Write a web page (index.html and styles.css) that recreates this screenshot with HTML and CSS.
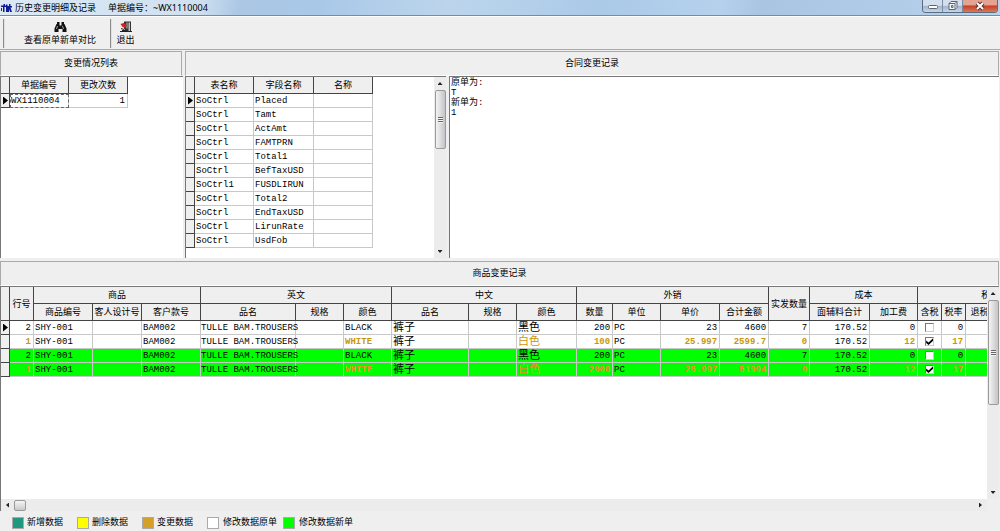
FILE: index.html
```html
<!DOCTYPE html>
<html lang="zh-CN">
<head>
<meta charset="utf-8">
<title>历史变更明细及记录</title>
<link rel="stylesheet" href="styles.css">
</head>
<body>
<header class="titlebar">
  <svg class="app-icon" viewBox="0 0 11 10" aria-hidden="true"><path d="M0 2.500h5V4H3.500v5H2V4H0zM5 1.500h1.500V9H5zM6 3h5v1.500H9.500L11 9H9L8.500 6 8 9H6.500zM8 1h1.500v2H8zM2.500 1H4v2H2.500zM0 5h1v3H0z" fill="#101c94"/></svg>
  <h1 class="title"><span>历史变更明细及记录</span><span>单据编号：~WX1110004</span></h1>
  <div class="window-buttons">
    <button class="win" aria-label="最小化"><svg width="12" height="12" viewBox="0 0 12 12"><rect x="1.500" y="5.500" width="9" height="3" rx="1" fill="#fff" stroke="#5a6575"/></svg></button>
    <button class="win" aria-label="还原"><svg width="12" height="12" viewBox="0 0 12 12"><path d="M4 1.500h6v6L8 9.500H2V3.500z" fill="#f4f6f8" stroke="#5c6776"/><path d="M4.500 5.500h1.500v2H4.500zM2 3.500h6v6M8 3.500l2-2" fill="none" stroke="#5c6776"/></svg></button>
    <button class="win win-close" aria-label="关闭"><svg width="12" height="12" viewBox="0 0 12 12"><path d="M3 3l6 6M9 3l-6 6" stroke="#5a3038" stroke-width="4"/><path d="M3 3l6 6M9 3l-6 6" stroke="#fff" stroke-width="2"/></svg></button>
  </div>
</header>

<nav class="toolbar">
  <button class="tool tool-wide">
    <svg width="13" height="12" viewBox="0 0 13 12" aria-hidden="true"><path d="M3 1h2.500v2H3zM7.500 1H10v2H7.500zM2.500 3h3v1.500h2V3h3l2 4.500V11h-4V8h-4v3h-4V7.500z" fill="#111"/><path d="M3.500 5L2.500 8M8.500 5l1 3" stroke="#ccc" stroke-width=".8"/></svg>
    <span>查看原单新单对比</span>
  </button>
  <button class="tool">
    <svg width="12" height="12" viewBox="0 0 12 12" aria-hidden="true"><path d="M4 .5h7V11H8L4 8z" fill="#333"/><path d="M6.500 1.500h1v6h-1zM8.500 1.500H10V10H8.500z" fill="#c4c4c4"/><path d="M.5 3l3-1 3 2-1 3-3-1z" fill="#d81e1e"/><path d="M1 7.500l3 1M0 10.500h12M2 9.500h5" stroke="#222"/></svg>
    <span>退出</span>
  </button>
</nav>

<main class="content">
  <div class="upper">
    <section class="changes">
      <h2 class="panel-title">变更情况列表</h2>
      <div class="grid-box">
        <table class="grid grid-changes">
          <colgroup><col class="w9"><col class="w59"><col class="w59"></colgroup>
          <thead><tr><th></th><th>单据编号</th><th>更改次数</th></tr></thead>
          <tbody><tr><th class="current"></th><td class="focused">WX1110004</td><td class="num">1</td></tr></tbody>
        </table>
      </div>
    </section>
    <section class="contract">
      <h2 class="panel-title">合同变更记录</h2>
      <div class="contract-body">
        <div class="grid-box fields">
          <div class="clip">
            <table class="grid grid-fields">
              <colgroup><col class="w9"><col class="w59"><col class="w60"><col class="w59"></colgroup>
              <thead><tr><th></th><th>表名称</th><th>字段名称</th><th>名称</th></tr></thead>
              <tbody>
                <tr><th class="current"></th><td>SoCtrl</td><td>Placed</td><td></td></tr>
                <tr><th></th><td>SoCtrl</td><td>Tamt</td><td></td></tr>
                <tr><th></th><td>SoCtrl</td><td>ActAmt</td><td></td></tr>
                <tr><th></th><td>SoCtrl</td><td>FAMTPRN</td><td></td></tr>
                <tr><th></th><td>SoCtrl</td><td>Total1</td><td></td></tr>
                <tr><th></th><td>SoCtrl</td><td>BefTaxUSD</td><td></td></tr>
                <tr><th></th><td>SoCtrl1</td><td>FUSDLIRUN</td><td></td></tr>
                <tr><th></th><td>SoCtrl</td><td>Total2</td><td></td></tr>
                <tr><th></th><td>SoCtrl</td><td>EndTaxUSD</td><td></td></tr>
                <tr><th></th><td>SoCtrl</td><td>LirunRate</td><td></td></tr>
                <tr><th></th><td>SoCtrl</td><td>UsdFob</td><td></td></tr>
              </tbody>
            </table>
          </div>
          <div class="vbar" aria-hidden="true"><i class="arrow up"></i><span class="thumb thumb-short"></span><i class="arrow down"></i></div>
        </div>
        <textarea class="memo" aria-label="合同变更记录" spellcheck="false">原单为:
T
新单为:
1</textarea>
      </div>
    </section>
  </div>

  <section class="goods">
    <h2 class="panel-title">商品变更记录</h2>
    <div class="grid-box goods-body">
      <div class="clip">
        <table class="grid grid-goods">
          <colgroup><col class="w9"><col class="w24"><col class="w59"><col class="w49"><col class="w59"><col class="w95"><col class="w48"><col class="w48"><col class="w77"><col class="w48"><col class="w60"><col class="w36"><col class="w48"><col class="w59"><col class="w49"><col class="w41"><col class="w60"><col class="w48"><col class="w24"><col class="w24"><col class="w28"><col class="w60"></colgroup>
          <thead>
            <tr><th rowspan="2"></th><th rowspan="2">行号</th><th colspan="3">商品</th><th colspan="3">英文</th><th colspan="3">中文</th><th colspan="4">外销</th><th rowspan="2">实发数量</th><th colspan="2">成本</th><th colspan="4">税</th></tr>
            <tr><th>商品编号</th><th>客人设计号</th><th>客户款号</th><th>品名</th><th>规格</th><th>颜色</th><th>品名</th><th>规格</th><th>颜色</th><th>数量</th><th>单位</th><th>单价</th><th>合计金额</th><th>面辅料合计</th><th>加工费</th><th>含税</th><th>税率</th><th>退税</th><th></th></tr>
          </thead>
          <tbody>
            <tr><th class="current"></th><td class="num">2</td><td>SHY-001</td><td></td><td>BAM002</td><td class="full">TULLE BAM.TROUSERS</td><td></td><td>BLACK</td><td class="zh">裤子</td><td></td><td class="zh">黑色</td><td class="num">200</td><td>PC</td><td class="num">23</td><td class="num">4600</td><td class="num">7</td><td class="num">170.52</td><td class="num">0</td><td class="tick"><input type="checkbox" aria-label="含税"></td><td class="num">0</td><td></td><td></td></tr>
            <tr><th></th><td class="num mod">1</td><td>SHY-001</td><td></td><td>BAM002</td><td class="full">TULLE BAM.TROUSERS</td><td></td><td class="mod">WHITE</td><td class="zh">裤子</td><td></td><td class="zh mod">白色</td><td class="num mod">100</td><td>PC</td><td class="num mod">25.997</td><td class="num mod">2599.7</td><td class="num mod">0</td><td class="num">170.52</td><td class="num mod">12</td><td class="tick"><input type="checkbox" checked aria-label="含税"></td><td class="num mod">17</td><td></td><td></td></tr>
            <tr class="new"><th></th><td class="num">2</td><td>SHY-001</td><td></td><td>BAM002</td><td class="full">TULLE BAM.TROUSERS</td><td></td><td>BLACK</td><td class="zh">裤子</td><td></td><td class="zh">黑色</td><td class="num">200</td><td>PC</td><td class="num">23</td><td class="num">4600</td><td class="num">7</td><td class="num">170.52</td><td class="num">0</td><td class="tick"><input type="checkbox" aria-label="含税"></td><td class="num">0</td><td></td><td></td></tr>
            <tr class="new"><th></th><td class="num mod">1</td><td>SHY-001</td><td></td><td>BAM002</td><td class="full">TULLE BAM.TROUSERS</td><td></td><td class="mod">WHITE</td><td class="zh">裤子</td><td></td><td class="zh mod">白色</td><td class="num mod">2000</td><td>PC</td><td class="num mod">25.997</td><td class="num mod">51994</td><td class="num mod">0</td><td class="num">170.52</td><td class="num mod">12</td><td class="tick"><input type="checkbox" checked aria-label="含税"></td><td class="num mod">17</td><td></td><td></td></tr>
          </tbody>
        </table>
      </div>
      <div class="vbar" aria-hidden="true"><i class="arrow up"></i><span class="thumb thumb-long"></span><i class="arrow down"></i></div>
      <div class="hbar" aria-hidden="true"><i class="arrow left"></i><span class="thumb-h"></span><i class="arrow right"></i></div>
      <div class="corner"></div>
    </div>
  </section>
</main>

<footer class="legend">
  <span class="key"><i class="swatch added"></i>新增数据</span>
  <span class="key"><i class="swatch deleted"></i>删除数据</span>
  <span class="key"><i class="swatch changed"></i>变更数据</span>
  <span class="key key-long"><i class="swatch before"></i>修改数据原单</span>
  <span class="key key-long"><i class="swatch after"></i>修改数据新单</span>
</footer>
</body>
</html>
```
FILE: styles.css
```css
* { box-sizing: border-box; }

body {
  margin: 0;
  height: 100vh;
  display: flex;
  flex-direction: column;
  overflow: hidden;
  background: #efefef;
  color: #000;
  font: 9px/12px "Liberation Mono", "Noto Sans CJK SC", monospace;
}

h1, h2 { margin: 0; font-size: 9px; font-weight: 400; }
button { font: inherit; color: inherit; padding: 0; margin: 0; border: 0; background: none; }

/* Title bar */
.titlebar {
  display: flex;
  align-items: flex-start;
  height: 16px;
  flex: none;
  padding: 0 2px 0 1px;
  border-bottom: 1px solid #7c8b95;
  background: linear-gradient(100deg, #dce9f5 0%, #cfe0f0 20%, #abc7e4 24%, #a9c8e8 32%, #bcd5ec 45%, #abcae8 60%, #b5d1ec 72%, #a9c5e2 76%, #b7d2ec 100%);
}
.app-icon { width: 11px; height: 10px; margin-top: 3px; }
.title {
  display: flex;
  gap: 12px;
  flex: 1;
  margin-left: 3px;
  font-family: "Noto Sans", "Noto Sans CJK SC", sans-serif;
  line-height: 15px;
}
.window-buttons {
  display: flex;
  border: 1px solid #5c6b80;
  border-top: 0;
  border-radius: 0 0 4px 4px;
  overflow: hidden;
}
.win {
  display: flex;
  align-items: center;
  justify-content: center;
  width: 20px;
  height: 12px;
  border-right: 1px solid #7b8ca2;
  background: linear-gradient(#d3dfed 0 45%, #a4b5cb 50%, #c3d6eb);
}
.win-close { width: 34px; border-right: 0; background: linear-gradient(#e5a393 0 40%, #c4412a 50%, #dc7a50); }

/* Toolbar */
.toolbar {
  display: flex;
  flex: none;
  height: 34px;
  padding: 2px 0 1px 3px;
  border-top: 1px solid #fff;
  border-bottom: 1px solid #aaa;
}
.tool {
  display: flex;
  flex-direction: column;
  align-items: center;
  gap: 2px;
  width: 29px;
  padding-top: 2px;
  border-left: 2px groove #e0e0e0;
}
.tool-wide { width: 107px; padding-left: 5px; }

/* Panels */
.content { display: flex; flex-direction: column; flex: 1; min-height: 0; }
.upper { display: flex; flex: none; height: 208px; gap: 2px; }
.changes { display: flex; flex-direction: column; width: 183px; flex: none; }
.contract { display: flex; flex-direction: column; flex: 1; min-width: 0; }
.goods { display: flex; flex-direction: column; flex: 1; min-height: 0; margin-top: 2px; }
.panel-title {
  flex: none;
  height: 25px;
  margin: 1px 1px 0 0;
  border: 1px solid #fff;
  border-top-color: #aaa;
  border-left-color: #aaa;
  border-right-color: #aaa;
  padding-top: 1px;
  line-height: 23px;
  text-align: center;
}
.grid-box {
  flex: 1;
  min-height: 0;
  border-top: 1px solid #777;
  border-left: 1px solid #777;
  background: #fff;
}
.contract-body { display: flex; flex: 1; gap: 3px; min-height: 0; }
.fields { display: flex; flex: none; width: 261px; }
.clip { flex: 1; min-width: 0; overflow: hidden; }
.memo {
  flex: 1;
  min-width: 0;
  margin-right: 1px;
  padding: 1px;
  border: 0;
  border-top: 1px solid #777;
  border-left: 1px solid #777;
  border-radius: 0;
  outline: 0;
  resize: none;
  overflow: hidden;
  background: #fff;
  color: #000;
  font: inherit;
  line-height: 10px;
}

/* Data grids */
.grid { table-layout: fixed; border-collapse: separate; border-spacing: 0; }
.grid-changes { width: 127px; }
.grid-fields { width: 187px; }
.grid-goods { width: 1053px; }
.w9 { width: 9px; }
.w24 { width: 24px; }
.w28 { width: 28px; }
.w36 { width: 36px; }
.w41 { width: 41px; }
.w48 { width: 48px; }
.w49 { width: 49px; }
.w59 { width: 59px; }
.w60 { width: 60px; }
.w77 { width: 77px; }
.w95 { width: 95px; }
.grid th {
  padding: 0;
  border-right: 1px solid #444;
  border-bottom: 1px solid #444;
  background: #efefef;
  font-weight: 400;
  white-space: nowrap;
}
.grid thead th { height: 17px; padding-top: 2px; line-height: 14px; }
.grid tbody th { height: 14px; }
.grid td {
  height: 14px;
  padding: 1px 1px 0;
  border-right: 1px solid #c8c8c8;
  border-bottom: 1px solid #c8c8c8;
  line-height: 12px;
  white-space: nowrap;
}
.grid .num { padding-right: 2px; text-align: right; }
.grid .full { padding-left: 0; }
.grid .zh { padding-top: 0; font-size: 11px; }
.grid .focused { outline: 1px dashed #666; outline-offset: -1px; }
.grid .mod { color: #c8960c; font-weight: 700; }
.grid .zh.mod { font-weight: 400; }
.grid .new td { background: #0f0; }
.grid .new .mod { color: #e8912c; }
.current::before {
  content: "";
  display: block;
  width: 5px;
  height: 8px;
  margin-left: 2px;
  background: #000;
  clip-path: polygon(0 0, 100% 50%, 0 100%);
}
.grid .tick { padding: 0; text-align: center; line-height: 0; }
.tick input {
  appearance: none;
  width: 9px;
  height: 9px;
  margin: 0;
  border: 1px solid #ccc;
  border-top-color: #777;
  border-left-color: #777;
  background: #fff;
}
.tick input:checked::before {
  content: "";
  display: block;
  width: 7px;
  height: 7px;
  background: #000;
  clip-path: polygon(0 35%, 35% 65%, 100% 5%, 100% 40%, 35% 100%, 0 70%);
}

/* Scroll bars */
.goods-body {
  display: grid;
  grid-template-columns: minmax(0, 1fr) 12px;
  grid-template-rows: minmax(0, 1fr) 12px;
  margin-right: 1px;
}
.vbar {
  display: flex;
  flex-direction: column;
  align-items: center;
  width: 12px;
  padding: 5px 0;
  background: #ececec;
}
.hbar { display: flex; align-items: center; padding: 0 5px; background: #ececec; }
.corner { background: #efefef; }
.arrow { width: 5px; height: 3px; background: #222; }
.up { clip-path: polygon(50% 0, 100% 100%, 0 100%); }
.down { margin-top: auto; clip-path: polygon(0 0, 100% 0, 50% 100%); }
.left, .right { width: 3px; height: 5px; }
.left { clip-path: polygon(100% 0, 100% 100%, 0 50%); }
.right { margin-left: auto; clip-path: polygon(0 0, 100% 50%, 0 100%); }
.thumb {
  display: flex;
  align-items: center;
  justify-content: center;
  width: 11px;
  margin-top: 5px;
  border: 1px solid #9a9a9a;
  border-radius: 2px;
  background: linear-gradient(90deg, #f4f4f4, #dcdcdc 50%, #c4c4c8);
}
.thumb::before {
  content: "";
  width: 5px;
  height: 6px;
  background: repeating-linear-gradient(#666 0 1px, #f4f4f4 1px 2px);
}
.thumb-short { height: 59px; }
.thumb-long { height: 105px; }
.thumb-h {
  width: 12px;
  height: 11px;
  margin-left: 5px;
  border: 1px solid #9a9a9a;
  border-radius: 2px;
  background: linear-gradient(#f4f4f4, #e0e0e0 50%, #c8c8cc);
}

/* Legend */
.legend {
  display: flex;
  flex: none;
  height: 20px;
  padding: 5px 12px 1px;
}
.key { display: flex; align-items: center; gap: 3px; margin-right: 14px; }
.key-long { gap: 4px; margin-right: 6px; }
.swatch { width: 12px; height: 12px; border: 1px solid #aaa; background-clip: padding-box; }
.added { background-color: #209880; }
.deleted { background-color: #ff0; }
.changed { background-color: #d4a028; }
.before { background-color: #fff; }
.after { background-color: #0f0; }
```
